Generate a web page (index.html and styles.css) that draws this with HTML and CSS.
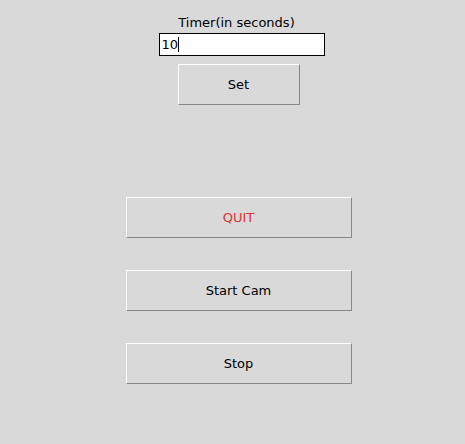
FILE: index.html
```html
<!DOCTYPE html>
<html>
<head>
<meta charset="utf-8">
<link rel="stylesheet" href="styles.css">
</head>
<body>
<div class="app">
  <div class="label">Timer(in seconds)</div>
  <div class="entry"><span class="value">10</span><span class="caret"></span></div>
  <div class="btn btn-set">Set</div>
  <div class="actions">
    <div class="btn btn-wide quit">QUIT</div>
    <div class="btn btn-wide">Start Cam</div>
    <div class="btn btn-wide">Stop</div>
  </div>
</div>
</body>
</html>
```
FILE: styles.css
```css
html, body {
  margin: 0;
  padding: 0;
  background: #d9d9d9;
}
.app {
  width: 465px;
  height: 444px;
  box-sizing: border-box;
  padding-left: 12px;
  display: flex;
  flex-direction: column;
  align-items: center;
  font-family: "DejaVu Sans", sans-serif;
  font-size: 13px;
  color: #000;
}
.label {
  margin-top: 13px;
  height: 20px;
  line-height: 20px;
  margin-left: -4px;
}
.entry {
  box-sizing: border-box;
  width: 166px;
  height: 23px;
  margin-left: 6px;
  background: #fff;
  border: 1px solid #000;
  display: flex;
  align-items: center;
  padding-left: 2px;
}
.caret {
  display: inline-block;
  width: 1px;
  height: 15px;
  background: #000;
}
.btn {
  box-sizing: border-box;
  display: flex;
  align-items: center;
  justify-content: center;
  border-top: 1px solid #fff;
  border-left: 1px solid #fff;
  border-right: 1px solid #888;
  border-bottom: 1px solid #888;
  background: #d9d9d9;
}
.btn-set {
  margin-top: 8px;
  width: 122px;
  height: 41px;
}
.actions {
  margin-top: 92px;
  display: flex;
  flex-direction: column;
  gap: 32px;
}
.btn-wide {
  width: 226px;
  height: 41px;
}
.quit {
  color: #e03030;
}
```
